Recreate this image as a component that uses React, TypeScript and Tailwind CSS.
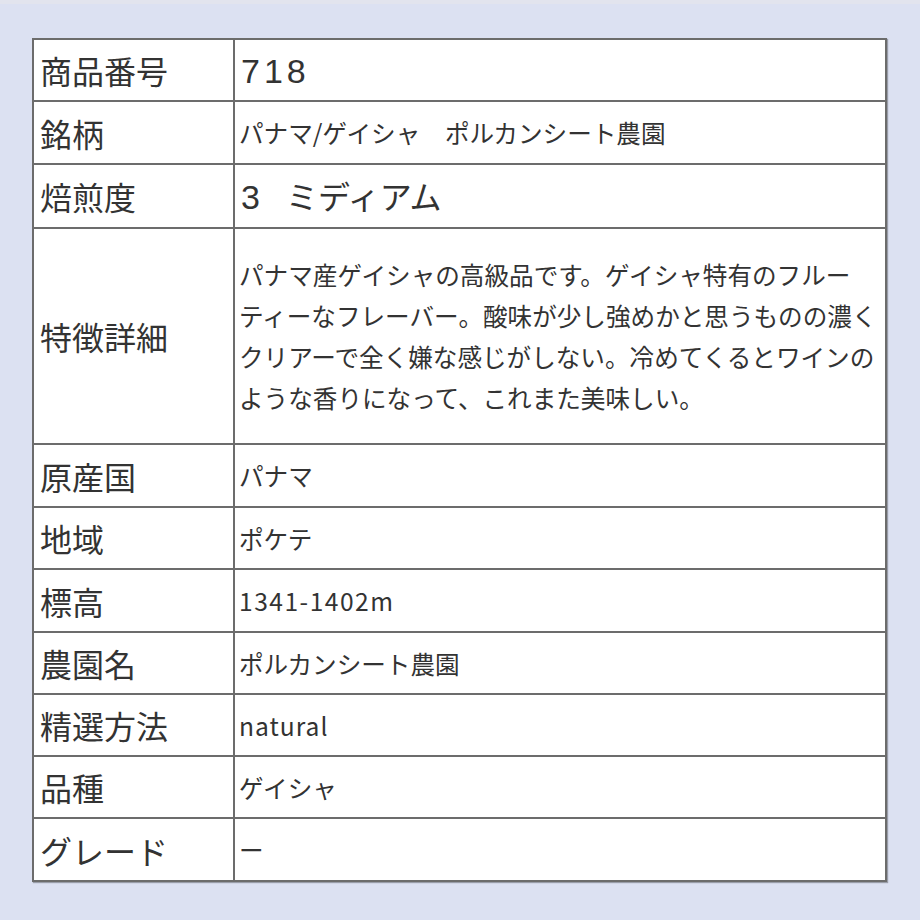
import * as React from "react";

const font = { fontFamily: '"Noto Sans CJK JP", "Noto Sans", sans-serif' };
const latin = { fontFamily: '"Liberation Sans", "Noto Sans CJK JP", sans-serif' };

type Row = {
  label: string;
  value: React.ReactNode;
  h: string;
  big?: boolean;
};

const rows: Row[] = [
  {
    label: "商品番号",
    value: (
      <span className="text-[34px] tracking-[4px]" style={latin}>
        718
      </span>
    ),
    h: "h-[62px]",
    big: true,
  },
  { label: "銘柄", value: "パナマ/ゲイシャ　ポルカンシート農園", h: "h-[63px]" },
  {
    label: "焙煎度",
    value: (
      <>
        <span className="text-[34px]" style={latin}>3</span>
        <span className="inline-block w-[26px]" />ミディアム
      </>
    ),
    h: "h-[64px]",
    big: true,
  },
  {
    label: "特徴詳細",
    value: (
      <span className="block leading-[41px] whitespace-nowrap">
        パナマ産ゲイシャの高級品です。ゲイシャ特有のフルー
        <br />
        ティーなフレーバー。酸味が少し強めかと思うものの濃く
        <br />
        クリアーで全く嫌な感じがしない。冷めてくるとワインの
        <br />
        ような香りになって、これまた美味しい。
      </span>
    ),
    h: "h-[216px]",
  },
  { label: "原産国", value: "パナマ", h: "h-[63px]" },
  { label: "地域", value: "ポケテ", h: "h-[62px]" },
  { label: "標高", value: <span className="tracking-[1.5px]">1341-1402m</span>, h: "h-[63px]" },
  { label: "農園名", value: "ポルカンシート農園", h: "h-[62px]" },
  { label: "精選方法", value: <span className="tracking-[1px]">natural</span>, h: "h-[62px]" },
  { label: "品種", value: "ゲイシャ", h: "h-[62px]" },
  { label: "グレード", value: "ー", h: "h-[63px]" },
];

export default function App() {
  return (
    <div className="w-[920px] h-[920px] bg-[#dce1f2] overflow-hidden" style={font}>
      <div className="h-[4px] bg-[#e2e4ee]" />
      <div className="pt-[34px] pl-[32px]">
        <table className="table-fixed border-collapse w-[855px] bg-white text-[#333] shadow-[1px_1px_1px_rgba(0,0,0,0.3)]">
          <colgroup>
            <col className="w-[201px]" />
            <col />
          </colgroup>
          <tbody>
            {rows.map((r) => (
              <tr key={r.label} className={r.h}>
                <td className="border-2 border-[#6c6c6c] pl-[6px] align-middle text-[32px] leading-none">
                  {r.label}
                </td>
                <td
                  className={
                    r.big
                      ? "border-2 border-[#6c6c6c] pl-[6px] align-middle text-[32px] leading-none"
                      : "border-2 border-[#6c6c6c] pl-[4px] align-middle text-[24.6px] leading-none whitespace-nowrap"
                  }
                >
                  {r.value}
                </td>
              </tr>
            ))}
          </tbody>
        </table>
      </div>
    </div>
  );
}
